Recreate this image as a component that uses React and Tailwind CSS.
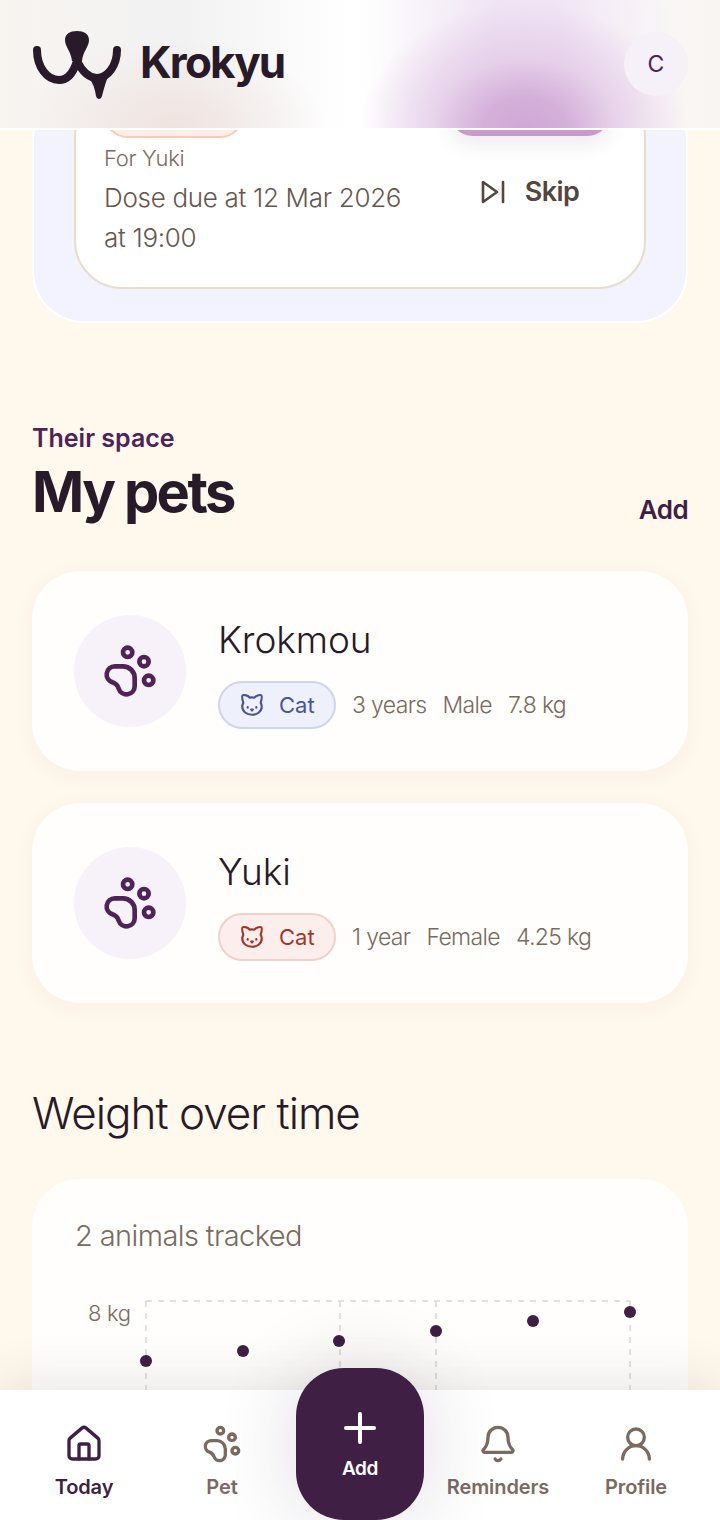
import { Plus, PawPrint, House, Bell, UserRound, Cat } from 'lucide-react';

function Logo() {
  return (
    <svg width="90" height="72" viewBox="30 30 90 72" className="shrink-0 mt-[4px]">
      <path d="M36 50c0 17 10 30 22 30 8 0 14-6 18-19 6 12 13 17 20 17 11 0 20-13 20-28" fill="none" stroke="#281a28" strokeWidth="8" strokeLinecap="round" strokeLinejoin="round" />
      <path d="M76 31c7 0 12 3 12 9 0 7-6 11-7 21h-10c-1-10-7-14-7-21 0-6 5-9 12-9z" fill="#281a28" />
      <path d="M88 78l20-4c-3 7-5 14-7 22-1 4-5 4-6 0-1-7-3-13-7-18z" fill="#281a28" />
    </svg>
  );
}

function SkipIcon() {
  return (
    <svg width="24" height="24" viewBox="0 0 24 24" fill="none" stroke="currentColor" strokeWidth="2.6" strokeLinejoin="round" strokeLinecap="round">
      <path d="M2 2v20l14-10z" />
      <path d="M22 2v20" />
    </svg>
  );
}

function PetCard({ name, tone, meta }) {
  return (
    <div className="h-[200px] rounded-[48px] bg-[#fffefc] shadow-[0_4px_24px_rgba(90,60,40,0.04)] flex items-center pl-[42px] gap-[32px]">
      <div className="w-[112px] h-[112px] rounded-full bg-[#f7f1f9] flex items-center justify-center text-[#4f2358]">
        <PawPrint size={56} strokeWidth={2} />
      </div>
      <div className="flex flex-col gap-[19px] pt-[5px]">
        <div className="text-[37px] leading-[44px] font-light text-[#281a28] tracking-[-0.1px]">{name}</div>
        <div className="flex items-center">
          {tone === 'blue' ? (
            <div className="w-[118px] h-[48px] rounded-full bg-[#eef0fc] border-2 border-[#cfd4ef] text-[#4a5394] flex items-center pl-[19px] gap-[14px] text-[22px]">
              <Cat size={26} strokeWidth={2} />
              <span>Cat</span>
            </div>
          ) : (
            <div className="w-[118px] h-[48px] rounded-full bg-[#fdeeee] border-2 border-[#f3cfcb] text-[#a5352a] flex items-center pl-[19px] gap-[14px] text-[22px]">
              <Cat size={26} strokeWidth={2} />
              <span>Cat</span>
            </div>
          )}
          <div className="flex items-center gap-[16px] ml-[16px] text-[23px] font-light text-[#7a6a60] tracking-[-0.65px]">
            {meta.map(m => (
              <span key={m}>{m}</span>
            ))}
          </div>
        </div>
      </div>
    </div>
  );
}

function Chart() {
  const dots = [[146, 1361], [243, 1351], [339, 1341], [436, 1331], [533, 1321], [630, 1312]];
  return (
    <svg width="656" height="140" viewBox="32 1290 656 140" className="block">
      <path d="M146 1301H630M146 1301V1430M340 1301V1430M436 1301V1430M630 1301V1430" fill="none" stroke="#e4e1dc" strokeWidth="2" strokeDasharray="6 6" />
      {dots.map(d => (
        <circle key={d[0]} cx={d[0]} cy={d[1]} r="6" fill="#401f45" />
      ))}
    </svg>
  );
}

function NavItem({ icon, label, active }) {
  return (
    <div className={`flex flex-col items-center gap-[9px] ${active ? 'text-[#401f45]' : 'text-[#7a6a60]'}`}>
      {icon}
      <span className="text-[20px] leading-[28px] font-semibold tracking-[-0.1px]">{label}</span>
    </div>
  );
}

export default function App() {
  return (
    <div className="w-[720px] h-[1520px] flex flex-col overflow-hidden bg-[#fff8ec] font-['Inter',sans-serif] relative">
      <header className="h-[130px] shrink-0 z-10 border-b-2 border-white flex items-center justify-between pl-[31px] pr-[32px] bg-[radial-gradient(ellipse_165px_125px_at_525px_128px,#d0a8d6_0%,#d4b0d9_25%,rgba(226,200,230,0.75)_55%,rgba(240,228,243,0)_100%),radial-gradient(ellipse_170px_230px_at_525px_30px,rgba(240,228,244,1)_20%,rgba(243,234,245,0.5)_65%,rgba(245,238,246,0.12)_88%,rgba(245,238,246,0)_100%),radial-gradient(ellipse_150px_90px_at_175px_128px,#f0e3df_0%,rgba(245,240,238,0)_100%),linear-gradient(90deg,#f8f4f0_0%,#f2f2f3_25%,#ffffff_48%,#fdfdfd_78%,#f8f5f2_100%)]">
        <div className="flex items-center gap-[19px]">
          <Logo />
          <span className="text-[44px] leading-[50px] font-bold text-[#281a28] tracking-[-1.8px] mb-[4px]">Krokyu</span>
        </div>
        <div className="w-[64px] h-[64px] rounded-full bg-[#f6f0f8] flex items-center justify-center text-[23px] text-[#4f2358]">C</div>
      </header>

      <main className="flex-1 overflow-hidden px-[32px] min-h-0">
        <div className="-mt-[43px] border-2 border-white rounded-[52px] bg-[#f2f3fe] px-[40px] pb-[32px]">
          <div className="rounded-[48px] border-2 border-[#e8dccb] bg-white h-[200px] pl-[28px] pr-[43px] flex justify-between">
            <div className="flex flex-col">
              <div className="w-[140px] h-[47px] rounded-[24px] bg-[#fdeee8] border-2 border-[#ffc8b6]" />
              <div className="mt-[6px] text-[22px] leading-[28px] font-light text-[#7a6a60] tracking-[-0.3px]">For Yuki</div>
              <div className="mt-[6px] w-[310px] text-[26px] leading-[40px] font-light text-[#655750] tracking-[-0.3px]">Dose due at 12 Mar 2026 at 19:00</div>
            </div>
            <div className="flex flex-col items-center w-[142px]">
              <div className="w-[160px] h-[45px] shrink-0 rounded-[26px] bg-[#c89bcc] shadow-[0_8px_20px_rgba(90,60,90,0.1)]" />
              <div className="mt-[40px] flex items-center gap-[20px] text-[#55453e]">
                <SkipIcon />
                <span className="text-[27px] leading-[32px] font-semibold tracking-[-0.6px]">Skip</span>
              </div>
            </div>
          </div>
        </div>

        <section className="mt-[100px]">
          <div className="text-[25px] leading-[32px] font-semibold text-[#4f2358] -translate-y-[1px]">Their space</div>
          <div className="mt-[4px] flex items-end justify-between">
            <h1 className="text-[56px] leading-[66px] font-bold text-[#281a28] tracking-[-2.6px]">My pets</h1>
            <span className="-mb-[2px] text-[26px] leading-[34px] font-semibold text-[#401f45] tracking-[-0.6px]">Add</span>
          </div>
          <div className="mt-[46px] flex flex-col gap-[32px]">
            <PetCard name="Krokmou" tone="blue" meta={['3 years', 'Male', '7.8 kg']} />
            <PetCard name="Yuki" tone="red" meta={['1 year', 'Female', '4.25 kg']} />
          </div>
        </section>

        <h2 className="mt-[80px] text-[44px] leading-[60px] font-light text-[#281a28] tracking-[-1px]">Weight over time</h2>
        <div className="mt-[36px] h-[400px] rounded-[48px] bg-[#fffefc] relative">
          <div className="pt-[37px] pl-[43px] text-[29px] leading-[40px] font-light text-[#7a6a60] tracking-[-0.6px]">2 animals tracked</div>
          <div className="mt-[34px]">
            <Chart />
          </div>
          <span className="absolute left-[56px] top-[120px] text-[22px] leading-[28px] font-light text-[#7a6a60] tracking-[-0.3px]">8 kg</span>
        </div>
      </main>

      <nav className="h-[130px] shrink-0 z-10 bg-white shadow-[0_-10px_50px_rgba(60,40,50,0.10)] grid grid-cols-5 px-[15px] pt-[34px] relative">
        <NavItem icon={<House size={40} strokeWidth={2} />} label="Today" active />
        <NavItem icon={<PawPrint size={40} strokeWidth={2} />} label="Pet" />
        <div className="relative">
          <div className="absolute left-[5px] -top-[56px] w-[128px] h-[152px] rounded-[48px] bg-[#401f45] text-white flex flex-col items-center pt-[36px] shadow-[0_0_80px_rgba(64,31,69,0.16)]">
            <Plus size={48} strokeWidth={2} />
            <span className="mt-[4px] text-[19px] leading-[26px] font-semibold tracking-[-0.4px]">Add</span>
          </div>
        </div>
        <NavItem icon={<Bell size={40} strokeWidth={2} />} label="Reminders" />
        <NavItem icon={<UserRound size={40} strokeWidth={2} />} label="Profile" />
      </nav>
    </div>
  );
}
